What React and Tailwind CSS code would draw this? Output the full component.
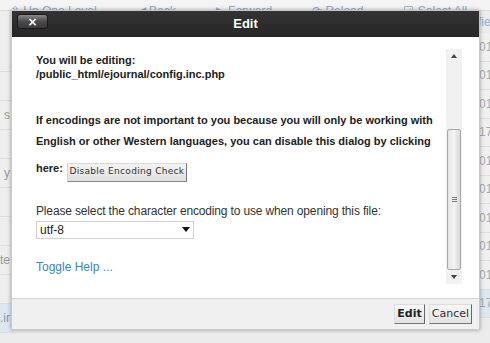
import React from "react";

const leftTexts = ["", "s", "", "y", "", "", "ate", "", ".ir"];
const rightTexts = ["01", "01", "01", "17", "01", "01", "01", "01", "01", "17"];

export default function App() {
  return (
    <div className="relative w-[490px] h-[343px] overflow-hidden bg-[#ececec]" style={{ fontFamily: '"Liberation Sans", Arial, sans-serif' }}>
      {/* background toolbar */}
      <div className="h-[11px] bg-[#f4f4f4] border-b border-[#dcdcdc] flex items-end gap-[40px] pl-[10px] text-[12px] leading-[12px] text-[#8eaad0] overflow-hidden whitespace-nowrap">
        <span className="-mb-[7px]">⇧ Up One Level</span>
        <span className="-mb-[7px]">◀ Back</span>
        <span className="-mb-[7px]">▶ Forward</span>
        <span className="-mb-[7px]">⟳ Reload</span>
        <span className="-mb-[7px]">☑ Select All</span>
      </div>
      {/* background table */}
      <div className="flex">
        <div className="w-[14px] flex flex-col">
          <div className="h-[61px] border-b border-[#dddddd] bg-[#eeeeee]" />
          {leftTexts.map((t, i) => (
            <div key={i} className={`h-[29px] border-b border-[#dddddd] flex items-center justify-end pr-[4px] text-[12px] whitespace-nowrap overflow-hidden ${i === 8 ? "bg-[#dde7f0] text-[#8899aa]" : "bg-[#eeeeee] text-[#999]"}`}>
              {t}
            </div>
          ))}
        </div>
        <div className="flex-1" />
        <div className="w-[12px] flex flex-col">
          <div className="h-[22px] flex items-center text-[12px] text-[#8fb0d8] whitespace-nowrap overflow-hidden">fie</div>
          {rightTexts.map((t, i) => (
            <div key={i} className={`h-[28.5px] border-b border-[#dddddd] flex items-center pl-[1px] text-[12px] text-[#aaa] ${i === 9 ? "bg-[#dde7f0]" : "bg-[#f0f0f0]"}`}>
              {t}
            </div>
          ))}
        </div>
      </div>

      {/* dialog */}
      <div className="absolute left-[11px] top-[10px] w-[469px] h-[320px] bg-white flex flex-col shadow-[0_0_4px_rgba(0,0,0,0.35)] border border-[#c8c8c8]">
        <div className="relative h-[26px] bg-gradient-to-b from-[#333333] to-[#262626] flex items-center justify-center">
          <span className="text-white font-bold text-[13px]">Edit</span>
          <div className="absolute left-[5px] top-[3px] w-[31px] h-[15px] rounded-[3px] border border-[#1a1a1a] bg-gradient-to-b from-[#8a8a8a] via-[#4a4a4a] to-[#3a3a3a] flex items-center justify-center">
            <span className="text-white font-bold text-[12px] leading-[12px]" style={{ fontFamily: '"DejaVu Sans", sans-serif' }}>×</span>
          </div>
        </div>
        <div className="flex-1 flex pt-[12px] pb-[14px]">
          <div className="flex-1 pl-[24px] text-[12px] text-[#222]">
            <div className="font-bold text-[11px] leading-[14px] pt-[4px]">You will be editing:</div>
            <div className="font-bold text-[11px] leading-[14px]">/public_html/ejournal/config.inc.php</div>
            <div className="font-bold text-[11px] leading-[21px] mt-[29px] w-[400px]">
              If encodings are not important to you because you will only be working with English or other Western languages, you can disable this dialog by clicking
            </div>
            <div className="flex items-start mt-[9px]">
              <span className="font-bold text-[11px] leading-[14px]">here:</span>
              <button className="ml-[4px] mt-[2px] h-[19px] w-[120px] whitespace-nowrap bg-gradient-to-b from-[#f4f4f4] to-[#e0e0e0] border border-[#d8d8d8] border-r-[#777] border-b-[#888] text-[9px] tracking-[0.3px] text-[#333] flex items-center justify-center" style={{ fontFamily: '"DejaVu Sans", Verdana, sans-serif' }}>
                Disable Encoding Check
              </button>
            </div>
            <div className="mt-[22px] leading-[14px] tracking-[-0.15px] text-[#333]">Please select the character encoding to use when opening this file:</div>
            <div className="mt-[3px] w-[158px] h-[18px] border border-[#d0d0d0] flex items-center justify-between pl-[3px] pr-[3px] text-[12px] text-[#222]">
              <span>utf-8</span>
              <svg width="8" height="5" viewBox="0 0 8 5"><path d="M0 0h8L4 5z" fill="#111" /></svg>
            </div>
            <div className="mt-[21px] text-[#3a85c5] leading-[14px]">Toggle Help ...</div>
          </div>
          {/* scrollbar */}
          <div className="w-[16px] mr-[17px] bg-[#f1f1f1] flex flex-col">
            <div className="h-[14px] flex items-center justify-center">
              <svg width="6" height="4" viewBox="0 0 6 4"><path d="M0 4h6L3 0z" fill="#444" /></svg>
            </div>
            <div className="h-[66px]" />
            <div className="h-[141px] mx-[1px] rounded-[2px] border border-[#a8a8a8] bg-gradient-to-r from-[#e4e4e4] via-[#f4f4f4] to-[#d8d8d8] flex items-center justify-center">
              <div className="flex flex-col gap-[1px]">
                <div className="w-[5px] h-[1px] bg-[#777]" />
                <div className="w-[5px] h-[1px] bg-[#777]" />
                <div className="w-[5px] h-[1px] bg-[#777]" />
              </div>
            </div>
            <div className="h-[14px] flex items-center justify-center">
              <svg width="6" height="4" viewBox="0 0 6 4"><path d="M0 0h6L3 4z" fill="#444" /></svg>
            </div>
          </div>
        </div>
        <div className="h-[32px] bg-[#f0f0f0] border-t border-[#d4d4d4] flex items-center justify-end gap-[4px] pr-[7px]" style={{ fontFamily: '"DejaVu Sans", Verdana, sans-serif' }}>
          <button className="h-[20px] px-[2px] bg-gradient-to-b from-[#f8f8f8] to-[#e2e2e2] border border-[#ddd] border-r-[#666] border-b-[#777] text-[11px] font-bold text-[#222]">Edit</button>
          <button className="h-[20px] px-[2px] bg-gradient-to-b from-[#f8f8f8] to-[#e2e2e2] border border-[#ddd] border-r-[#666] border-b-[#777] text-[11px] text-[#333]">Cancel</button>
        </div>
      </div>
    </div>
  );
}
